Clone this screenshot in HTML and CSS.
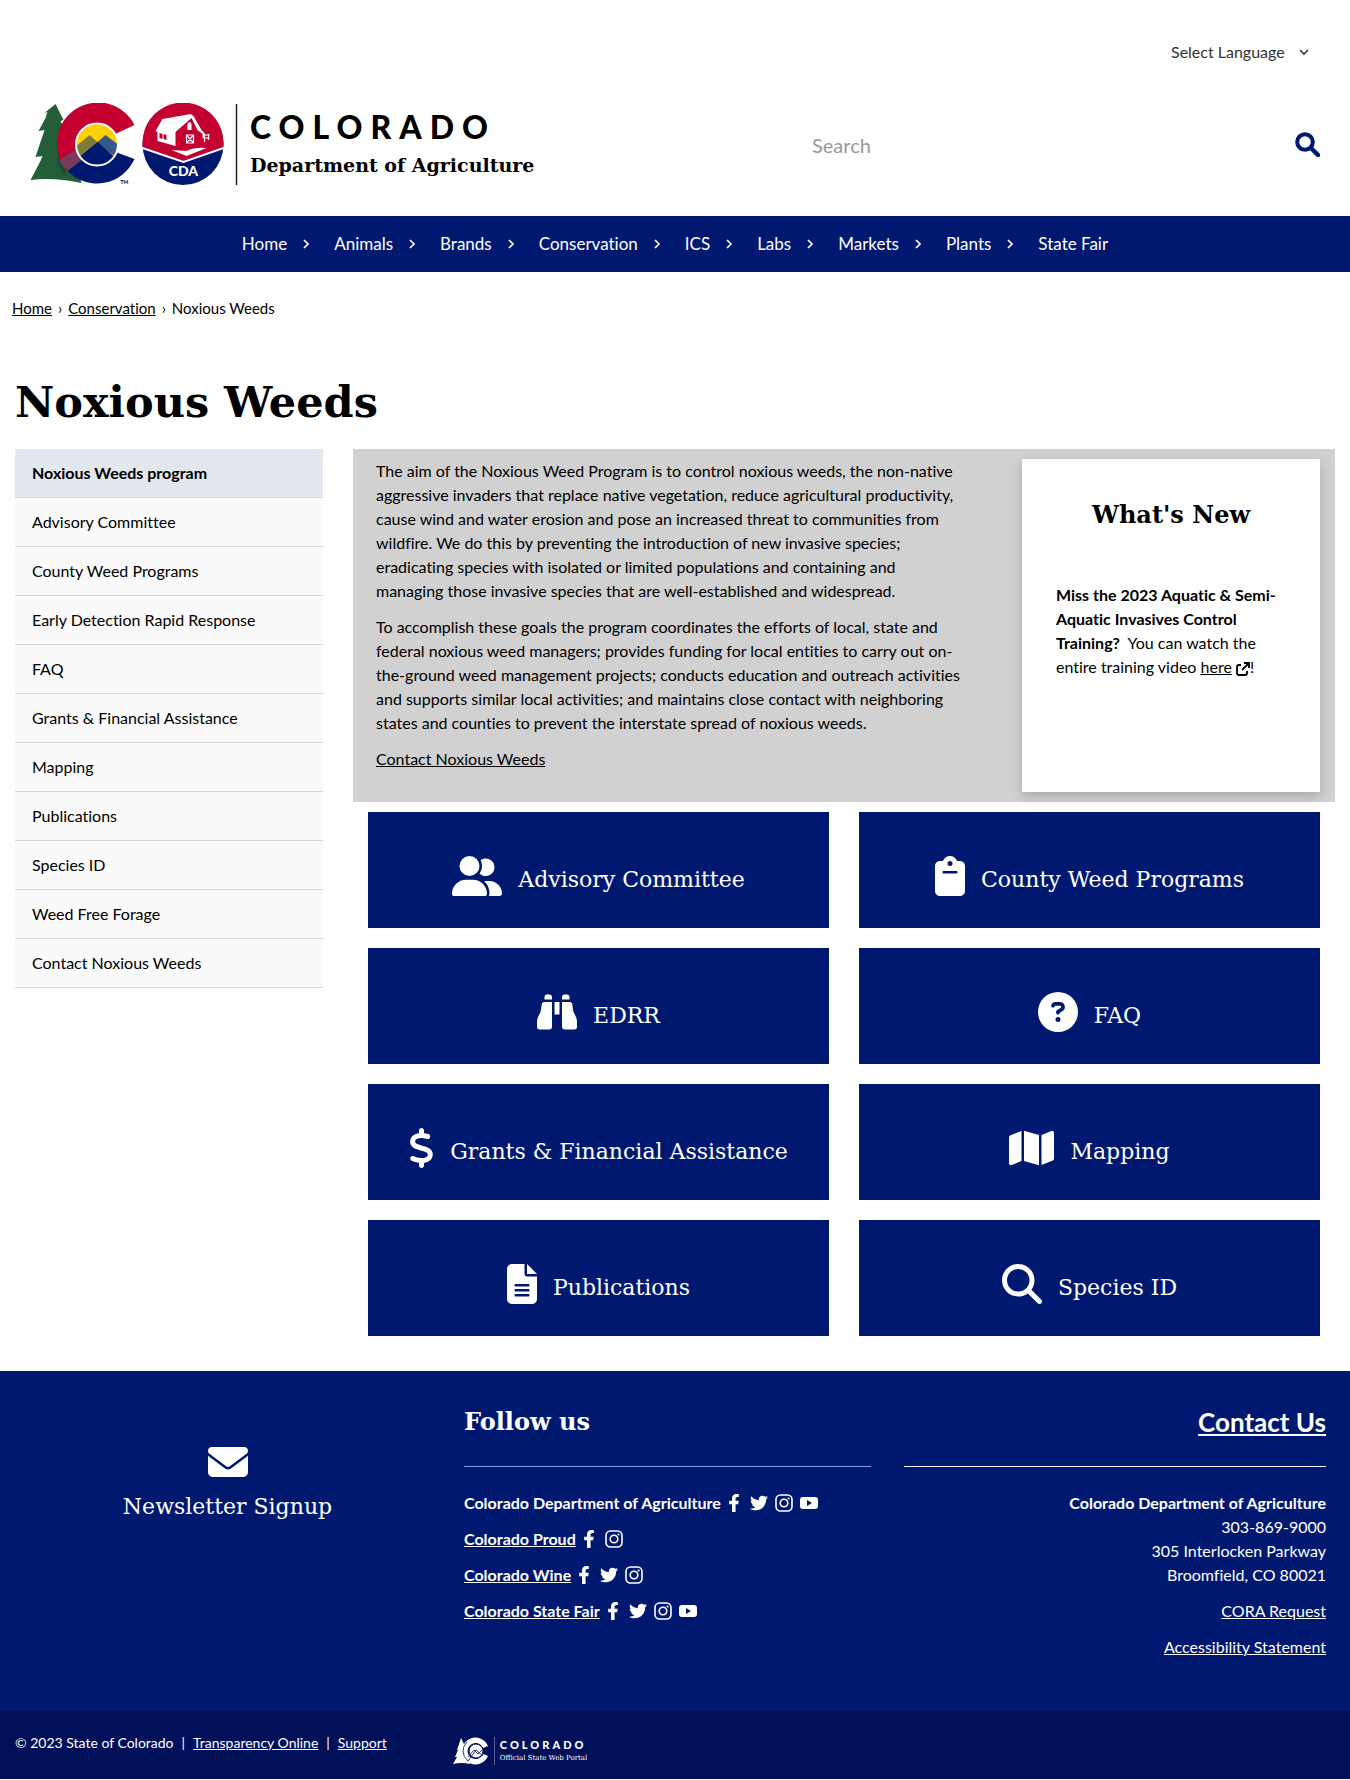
FILE: index.html
```html
<!DOCTYPE html>
<html lang="en">
<head>
<meta charset="utf-8">
<meta name="viewport" content="width=device-width, initial-scale=1">
<title>Noxious Weeds | Department of Agriculture</title>
<link rel="stylesheet" href="styles.css">
</head>
<body>
<svg class="sprite" aria-hidden="true">
  <symbol id="facebook" viewBox="0 0 320 512"><path d="M279.14 288l14.22-92.66h-88.91v-60.13c0-25.35 12.42-50.06 52.24-50.06h40.42V6.26S260.43 0 225.36 0c-73.22 0-121.08 44.38-121.08 124.72v70.62H22.89V288h81.39v224h100.17V288z"/></symbol>
  <symbol id="twitter" viewBox="0 0 512 512"><path d="M459.37 151.716c.325 4.548.325 9.097.325 13.645 0 138.72-105.583 298.558-298.558 298.558-59.452 0-114.68-17.219-161.137-47.106 8.447.974 16.568 1.299 25.34 1.299 49.055 0 94.213-16.568 130.274-44.832-46.132-.975-84.792-31.188-98.112-72.772 6.498.974 12.995 1.624 19.818 1.624 9.421 0 18.843-1.3 27.614-3.573-48.081-9.747-84.143-51.98-84.143-102.985v-1.299c13.969 7.797 30.214 12.67 47.431 13.319-28.264-18.843-46.781-51.005-46.781-87.391 0-19.492 5.197-37.36 14.294-52.954 51.655 63.675 129.3 105.258 216.365 109.807-1.624-7.797-2.599-15.918-2.599-24.04 0-57.828 46.782-104.934 104.934-104.934 30.213 0 57.502 12.67 76.67 33.137 23.715-4.548 46.456-13.32 66.599-25.34-7.798 24.366-24.366 44.833-46.132 57.827 21.117-2.273 41.584-8.122 60.426-16.243-14.292 20.791-32.161 39.308-52.628 54.253z"/></symbol>
  <symbol id="instagram" viewBox="0 0 18 18"><rect x="1" y="1" width="16" height="16" rx="4.5" fill="none" stroke="currentColor" stroke-width="1.6"/><circle cx="9" cy="9" r="3.8" fill="none" stroke="currentColor" stroke-width="1.6"/><circle cx="13.6" cy="4.5" r="1.1"/></symbol>
  <symbol id="youtube" viewBox="0 0 18 18"><path fill-rule="evenodd" d="M3 3h12q3 0 3 3v6q0 3-3 3H3q-3 0-3-3V6q0-3 3-3zM7 6v6l5-3z"/></symbol>
  <symbol id="chevron" viewBox="0 0 8 10"><path d="M2 1l4 4-4 4" fill="none" stroke="currentColor" stroke-width="1.7"/></symbol>
</svg>

<header class="header">
  <div class="language">
    <select class="language-select" aria-label="Select Language">
      <option>Select Language</option>
    </select>
    <svg class="language-arrow" viewBox="0 0 10 6" aria-hidden="true"><path d="M1 1l4 4 4-4" fill="none" stroke="currentColor" stroke-width="1.6"/></svg>
  </div>
  <div class="masthead">
    <a class="brand" href="#">
      <svg class="brand-mark" viewBox="31 103 207 83" aria-hidden="true">
        <path fill="#235e39" d="M56 104l8 16-3 1 7 14 14 48q-28-6-51-3l10-19 2-5-7 1 7-21 2-6-6 1 7-13 2-6-3 1z"/>
        <path fill="#c3002f" d="M135 125A41 41 0 1 0 68 171L82 160L116 134z"/>
        <path fill="#001970" d="M135 159A41 41 0 0 1 68 171L82 158L116 152z"/>
        <path fill="#7a3b58" d="M77 149l5 11-14 11q-6-6-8-11z"/>
        <path fill="#1d4a35" opacity=".8" d="M58 146q-1 15 10 25l-3 4-7-10z"/>
        <circle cx="97.5" cy="144.500" r="21" fill="#ffd100"/>
        <path fill="#807b3a" d="M77 146l13-11 8 7-17 15q-5-5-4-11z"/>
        <path fill="#345a87" d="M97 143l9-8 12 9q0 8-3 12z"/>
        <path fill="#001970" d="M98 142l17 15q-7 8-18 8t-16-9z"/>
        <circle cx="97.5" cy="144.500" r="21" fill="none" stroke="#fff" stroke-width="2"/>
        <text x="121" y="184" class="mark-tm">TM</text>
        <circle cx="183.5" cy="144.500" r="40.5" fill="#001970"/>
        <path fill="#c3002f" d="M143.200 147A40.500 40.500 0 1 1 223.800 147L184 161z"/>
        <path d="M143 148l41 14 40-14" fill="none" stroke="#fff" stroke-width="2"/>
        <path fill="#fff" d="M156 131l7-12 28-5 3 2 8 14 3 3v5h-2v-4l-5-4-6-12-16 14 0 14-18-5v-9z"/>
        <path fill="#c3002f" d="M160 133l3 1v5l-3-1zM164 134l3 1v5l-3-1z"/>
        <path fill="#fff" d="M188 124q2-4 4 0v6h-4z"/>
        <path d="M187 135h7v8h-7zl7 8M194 135l-7 8M204 135h6M204 138h6M209 134v6M205 134v8" fill="none" stroke="#fff" stroke-width="1.200"/>
        <path fill="#fff" d="M172 150l15 1q8-4 20-3l-20 8z"/>
        <text x="184" y="176" class="mark-cda">CDA</text>
        <path stroke="#222" stroke-width="1.500" d="M237 104v81"/>
      </svg>
      <span class="brand-text">
        <span class="brand-state">COLORADO</span>
        <span class="brand-agency">Department of Agriculture</span>
      </span>
    </a>
    <form class="search">
      <input class="search-input" type="search" placeholder="Search" aria-label="Search">
      <button class="search-button" type="button" aria-label="Search">
        <svg class="search-icon" viewBox="0 0 25 25"><circle cx="10" cy="10" r="7.800" fill="none" stroke="currentColor" stroke-width="4"/><path d="M16 16l7 7" stroke="currentColor" stroke-width="4.500" stroke-linecap="round"/></svg>
      </button>
    </form>
  </div>
</header>

<nav class="nav" aria-label="Main">
  <a class="nav-link" href="#">Home<svg class="nav-arrow"><use href="#chevron"/></svg></a>
  <a class="nav-link" href="#">Animals<svg class="nav-arrow"><use href="#chevron"/></svg></a>
  <a class="nav-link" href="#">Brands<svg class="nav-arrow"><use href="#chevron"/></svg></a>
  <a class="nav-link" href="#">Conservation<svg class="nav-arrow"><use href="#chevron"/></svg></a>
  <a class="nav-link" href="#">ICS<svg class="nav-arrow"><use href="#chevron"/></svg></a>
  <a class="nav-link" href="#">Labs<svg class="nav-arrow"><use href="#chevron"/></svg></a>
  <a class="nav-link" href="#">Markets<svg class="nav-arrow"><use href="#chevron"/></svg></a>
  <a class="nav-link" href="#">Plants<svg class="nav-arrow"><use href="#chevron"/></svg></a>
  <a class="nav-link" href="#">State Fair</a>
</nav>

<nav class="breadcrumb" aria-label="Breadcrumb">
  <a href="#">Home</a><span>›</span><a href="#">Conservation</a><span>›</span><span>Noxious Weeds</span>
</nav>

<main class="main">
  <h1 class="title">Noxious Weeds</h1>
  <div class="columns">
    <nav class="sidebar" aria-label="Section">
      <a class="sidebar-link sidebar-current" href="#">Noxious Weeds program</a>
      <a class="sidebar-link" href="#">Advisory Committee</a>
      <a class="sidebar-link" href="#">County Weed Programs</a>
      <a class="sidebar-link" href="#">Early Detection Rapid Response</a>
      <a class="sidebar-link" href="#">FAQ</a>
      <a class="sidebar-link" href="#">Grants &amp; Financial Assistance</a>
      <a class="sidebar-link" href="#">Mapping</a>
      <a class="sidebar-link" href="#">Publications</a>
      <a class="sidebar-link" href="#">Species ID</a>
      <a class="sidebar-link" href="#">Weed Free Forage</a>
      <a class="sidebar-link" href="#">Contact Noxious Weeds</a>
    </nav>
    <div class="content">
      <section class="intro">
        <div class="intro-text">
          <p>The aim of the Noxious Weed Program is to control noxious weeds, the non-native aggressive invaders that replace native vegetation, reduce agricultural productivity, cause wind and water erosion and pose an increased threat to communities from wildfire. We do this by preventing the introduction of new invasive species; eradicating species with isolated or limited populations and containing and managing those invasive species that are well-established and widespread.</p>
          <p>To accomplish these goals the program coordinates the efforts of local, state and federal noxious weed managers; provides funding for local entities to carry out on-the-ground weed management projects; conducts education and outreach activities and supports similar local activities; and maintains close contact with neighboring states and counties to prevent the interstate spread of noxious weeds.</p>
          <p><a href="#">Contact Noxious Weeds</a></p>
        </div>
        <aside class="news">
          <h2 class="news-title">What's New</h2>
          <p><strong>Miss the 2023 Aquatic &amp; Semi-Aquatic Invasives Control Training?</strong>&nbsp; You can watch the entire training video <a href="#">here</a> <svg class="external" viewBox="0 0 14 14" aria-hidden="true"><path d="M5 3H3q-2 0-2 2v6q0 2 2 2h6q2 0 2-2V9M8 1h5v5M13 1L6 8" fill="none" stroke="currentColor" stroke-width="1.800"/></svg>!</p>
        </aside>
      </section>
      <section class="tiles">
        <a class="tile" href="#"><svg class="tile-icon" viewBox="0 0 640 512"><path d="M96 128a128 128 0 1 1 256 0A128 128 0 1 1 96 128zM0 482.3C0 383.8 79.800 304 178.300 304h91.400C368.200 304 448 383.800 448 482.300c0 16.400-13.300 29.700-29.700 29.700H29.700C13.300 512 0 498.700 0 482.300zM609.300 512H471.400c5.400-9.400 8.600-20.300 8.600-32v-8c0-60.700-27.100-115.200-69.800-151.800c2.400-.1 4.700-.2 7.100-.2h61.400C567.800 320 640 392.200 640 481.300c0 17-13.800 30.700-30.700 30.700zM432 256c-31 0-59-12.600-79.300-32.900C372.400 196.500 384 163.600 384 128c0-26.800-6.600-52.100-18.300-74.300C384.300 40.100 407.200 32 432 32c61.900 0 112 50.100 112 112s-50.100 112-112 112z"/></svg><span>Advisory Committee</span></a>
        <a class="tile" href="#"><svg class="tile-icon" viewBox="0 0 384 512"><path d="M192 0c-41.800 0-77.400 26.700-90.500 64H64C28.700 64 0 92.700 0 128V448c0 35.300 28.700 64 64 64H320c35.300 0 64-28.700 64-64V128c0-35.300-28.700-64-64-64H282.500C269.400 26.700 233.800 0 192 0zm0 64a32 32 0 1 1 0 64 32 32 0 1 1 0-64zM112 192H272c8.800 0 16 7.200 16 16s-7.200 16-16 16H112c-8.800 0-16-7.200-16-16s7.200-16 16-16z"/></svg><span>County Weed Programs</span></a>
        <a class="tile" href="#"><svg class="tile-icon" viewBox="0 0 512 512"><path d="M128 32h32c17.700 0 32 14.300 32 32V96H96V64c0-17.700 14.300-32 32-32zm64 96V448c0 17.700-14.300 32-32 32H32c-17.700 0-32-14.300-32-32V388.900c0-34.600 9.400-68.600 27.200-98.300C40.900 267.800 49.700 242.400 53 216L60.500 156c2-16 15.600-28 31.800-28H192zm227.800 0c16.100 0 29.800 12 31.800 28L459 216c3.300 26.400 12.100 51.800 25.800 74.600c17.800 29.700 27.200 63.700 27.200 98.300V448c0 17.700-14.300 32-32 32H352c-17.700 0-32-14.300-32-32V128h99.800zM320 64c0-17.700 14.300-32 32-32h32c17.700 0 32 14.300 32 32V96H320V64zm-32 64V288H224V128h64z"/></svg><span>EDRR</span></a>
        <a class="tile" href="#"><svg class="tile-icon" viewBox="0 0 512 512"><path d="M256 512A256 256 0 1 0 256 0a256 256 0 1 0 0 512zM169.800 165.300c7.900-22.300 29.100-37.300 52.800-37.300h58.300c34.900 0 63.100 28.300 63.100 63.100c0 22.600-12.100 43.500-31.700 54.800L280 264.400c-.2 13-10.900 23.600-24 23.600c-13.300 0-24-10.700-24-24V250.500c0-8.600 4.600-16.500 12.100-20.800l44.300-25.400c4.700-2.700 7.600-7.700 7.600-13.100c0-8.400-6.800-15.100-15.100-15.100H222.600c-3.400 0-6.400 2.100-7.500 5.300l-.4 1.200c-4.400 12.500-18.200 19-30.600 14.600s-19-18.200-14.600-30.600l.4-1.200zM224 352a32 32 0 1 1 64 0 32 32 0 1 1 -64 0z"/></svg><span>FAQ</span></a>
        <a class="tile" href="#"><svg class="tile-icon" viewBox="0 0 320 512"><path d="M160 0c17.700 0 32 14.300 32 32V67.700c1.600 .2 3.100 .4 4.700 .7c.4 .1 .7 .1 1.100 .2l48 8.800c17.400 3.200 28.900 19.900 25.700 37.200s-19.900 28.900-37.200 25.700l-47.500-8.700c-31.300-4.600-58.900-1.500-78.300 6.200s-27.200 18.300-29 28.100c-2 10.700-.5 16.700 1.200 20.400c1.800 3.900 5.500 8.300 12.800 13.200c16.300 10.700 41.300 17.700 73.700 26.300l2.900 .8c28.600 7.600 63.600 16.800 89.600 33.800c14.200 9.300 27.600 21.900 35.900 39.500c8.500 17.900 10.300 37.900 6.400 59.200c-6.900 38-33.100 63.400-65.600 76.700c-13.700 5.600-28.600 9.200-44.400 11V480c0 17.700-14.300 32-32 32s-32-14.300-32-32V445.100c-.4-.1-.9-.1-1.300-.2l-.2 0 0 0c-24.400-3.800-64.500-14.300-91.500-26.300c-16.100-7.200-23.400-26.100-16.200-42.200s26.100-23.400 42.200-16.200c20.900 9.300 55.300 18.500 75.200 21.600c31.900 4.700 58.200 2 76-5.300c16.900-6.900 24.600-16.900 26.800-28.900c1.900-10.600 .4-16.700-1.300-20.400c-1.900-4-5.600-8.400-13-13.300c-16.400-10.700-41.500-17.700-74-26.300l-2.800-.7 0 0C119.400 279.300 84.400 270 58.400 253c-14.200-9.300-27.500-22-35.800-39.600c-8.400-17.900-10.100-37.900-6.100-59.200C23.700 116 52.300 91.200 84.800 78.300c13.300-5.300 27.900-8.900 43.200-11V32c0-17.700 14.300-32 32-32z"/></svg><span>Grants &amp; Financial Assistance</span></a>
        <a class="tile" href="#"><svg class="tile-icon" viewBox="0 0 576 512"><path d="M384 476.100L192 421.200V35.900L384 90.800V476.100zm32-1.200V88.400L543.100 37.500c15.800-6.300 32.900 5.300 32.900 22.300V394.600c0 9.800-6 18.600-15.100 22.300L416 474.800zM15.100 95.100L160 37.200V423.600L32.900 474.500C17.100 480.800 0 469.200 0 452.200V117.400c0-9.800 6-18.600 15.100-22.300z"/></svg><span>Mapping</span></a>
        <a class="tile" href="#"><svg class="tile-icon" viewBox="0 0 384 512"><path d="M64 0C28.700 0 0 28.700 0 64V448c0 35.300 28.700 64 64 64H320c35.300 0 64-28.700 64-64V160H256c-17.700 0-32-14.300-32-32V0H64zM256 0V128H384L256 0zM112 256H272c8.800 0 16 7.200 16 16s-7.200 16-16 16H112c-8.800 0-16-7.200-16-16s7.200-16 16-16zm0 64H272c8.800 0 16 7.200 16 16s-7.200 16-16 16H112c-8.800 0-16-7.200-16-16s7.200-16 16-16zm0 64H272c8.800 0 16 7.200 16 16s-7.200 16-16 16H112c-8.800 0-16-7.200-16-16s7.200-16 16-16z"/></svg><span>Publications</span></a>
        <a class="tile" href="#"><svg class="tile-icon" viewBox="0 0 512 512"><path d="M416 208c0 45.900-14.900 88.300-40 122.700L502.600 457.400c12.500 12.500 12.500 32.800 0 45.300s-32.800 12.500-45.300 0L330.700 376c-34.400 25.200-76.800 40-122.700 40C93.100 416 0 322.900 0 208S93.100 0 208 0S416 93.100 416 208zM208 352a144 144 0 1 0 0-288 144 144 0 1 0 0 288z"/></svg><span>Species ID</span></a>
      </section>
    </div>
  </div>
</main>

<footer>
  <div class="footer">
    <a class="newsletter" href="#">
      <svg class="envelope" viewBox="0 64 512 384"><path d="M48 64C21.500 64 0 85.500 0 112c0 15.100 7.100 29.300 19.200 38.400L236.800 313.600c11.400 8.500 27 8.500 38.400 0L492.800 150.400c12.100-9.100 19.200-23.300 19.200-38.400c0-26.500-21.500-48-48-48H48zM0 176V384c0 35.300 28.700 64 64 64H448c35.300 0 64-28.700 64-64V176L294.400 339.200c-22.800 17.100-54 17.100-76.800 0L0 176z"/></svg>
      <span>Newsletter Signup</span>
    </a>
    <section class="follow">
      <h2 class="footer-title">Follow us</h2>
      <ul class="follow-list">
        <li class="follow-row"><strong>Colorado Department of Agriculture</strong>
          <a class="social social-narrow" href="#" aria-label="Facebook"><svg><use href="#facebook"/></svg></a><a class="social" href="#" aria-label="Twitter"><svg><use href="#twitter"/></svg></a><a class="social" href="#" aria-label="Instagram"><svg><use href="#instagram"/></svg></a><a class="social" href="#" aria-label="YouTube"><svg><use href="#youtube"/></svg></a></li>
        <li class="follow-row"><a class="follow-name" href="#">Colorado Proud</a>
          <a class="social social-narrow" href="#" aria-label="Facebook"><svg><use href="#facebook"/></svg></a><a class="social" href="#" aria-label="Instagram"><svg><use href="#instagram"/></svg></a></li>
        <li class="follow-row"><a class="follow-name" href="#">Colorado Wine</a>
          <a class="social social-narrow" href="#" aria-label="Facebook"><svg><use href="#facebook"/></svg></a><a class="social" href="#" aria-label="Twitter"><svg><use href="#twitter"/></svg></a><a class="social" href="#" aria-label="Instagram"><svg><use href="#instagram"/></svg></a></li>
        <li class="follow-row"><a class="follow-name" href="#">Colorado State Fair</a>
          <a class="social social-narrow" href="#" aria-label="Facebook"><svg><use href="#facebook"/></svg></a><a class="social" href="#" aria-label="Twitter"><svg><use href="#twitter"/></svg></a><a class="social" href="#" aria-label="Instagram"><svg><use href="#instagram"/></svg></a><a class="social" href="#" aria-label="YouTube"><svg><use href="#youtube"/></svg></a></li>
      </ul>
    </section>
    <section class="contact">
      <h2 class="footer-title contact-title"><a href="#">Contact Us</a></h2>
      <p><strong>Colorado Department of Agriculture</strong><br>303-869-9000<br>305 Interlocken Parkway<br>Broomfield, CO 80021</p>
      <p><a href="#">CORA Request</a></p>
      <p><a href="#">Accessibility Statement</a></p>
    </section>
  </div>
  <div class="legal">
    <p class="legal-links">© 2023 State of Colorado<span>|</span><a href="#">Transparency Online</a><span>|</span><a href="#">Support</a></p>
    <a class="portal" href="#">
      <svg class="portal-mark" viewBox="0 0 42 28" aria-hidden="true">
        <path fill="#fff" d="M8 1l3 6 3 8 3 12q-9-2-17 0l4-7-2 0 3-7-1 0z"/>
        <path fill="#fff" d="M35 9A13.500 13.500 0 1 0 35 19l-5-2a8 8 0 1 1 0-6z"/>
        <circle cx="23" cy="14" r="7" fill="#fff" stroke="#001159"/>
        <path d="M10 14q0 6 5 10l8-11 7 6M15 20l6-7 4 4 4-4M10 14q0-5 4-9" fill="none" stroke="#001159" stroke-width=".8"/>
        <path d="M41.500 0v28" stroke="#566096"/>
      </svg>
      <span class="portal-text"><span class="portal-state">COLORADO</span><span class="portal-name">Official State Web Portal</span></span>
    </a>
  </div>
</footer>
</body>
</html>
```

FILE: styles.css
```css
:root {
  --navy: #001970;
  --sans: Lato, "Trebuchet MS", sans-serif;
  --slab: "DejaVu Serif", "Liberation Serif", serif;
}

* { box-sizing: border-box; }

body {
  margin: 0;
  background: #fff;
  color: #000;
  font: 16px/24px var(--sans);
  font-variant-ligatures: none;
}

a { color: inherit; }
p { margin: 0 0 12px; }
svg { fill: currentColor; flex: none; }
.sprite { display: none; }

/* Header */
.header { padding: 40px 30px 30px; }
.language {
  display: flex;
  justify-content: flex-end;
  align-items: center;
  gap: 14px;
  padding-right: 11px;
  color: #333;
}
.language-select {
  appearance: none;
  border: 0;
  padding: 0;
  background: none;
  color: inherit;
  font: inherit;
}
.language-arrow { width: 10px; height: 6px; }
.masthead {
  display: flex;
  justify-content: space-between;
  align-items: center;
  margin-top: 39px;
}
.brand {
  display: flex;
  align-items: center;
  gap: 12px;
  color: #000;
  text-decoration: none;
}
.brand-mark { width: 208px; height: 83px; }
.mark-tm { font: bold 5px var(--sans); }
.mark-cda { font: 900 14px var(--sans); fill: #fff; text-anchor: middle; }
.brand-text { display: flex; flex-direction: column; gap: 4px; }
.brand-state { font: 900 32px/36px var(--sans); letter-spacing: 8px; }
.brand-agency { font: bold 19px/32px var(--slab); }
.search { display: flex; align-items: center; width: 508px; }
.search-input {
  flex: 1;
  min-width: 0;
  border: 0;
  padding: 0;
  background: none;
  font: 20px/28px var(--sans);
}
.search-input::placeholder { color: #999; }
.search-button { display: flex; border: 0; padding: 0; background: none; color: var(--navy); }
.search-icon { width: 25px; height: 25px; }

/* Main navigation */
.nav {
  display: flex;
  justify-content: center;
  gap: 24px;
  padding: 16px 0;
  background: var(--navy);
  color: #fff;
  font-size: 17px;
}
.nav-link { display: flex; align-items: center; gap: 15px; text-decoration: none; }
.nav-arrow { width: 8px; height: 10px; }

.breadcrumb { display: flex; gap: 6px; padding: 24px 12px; font-size: 15px; }

/* Page body */
.main { padding: 0 15px 35px; }
.title { margin: 28px 0 17px; font: bold 43px/60px var(--slab); }
.columns { display: grid; grid-template-columns: 308fr 982fr; gap: 30px; align-items: start; }
.sidebar-link {
  display: block;
  padding: 12px 17px;
  border-bottom: 1px solid #d6d6d6;
  background: #fafafa;
  text-decoration: none;
}
.sidebar-current { background: #e3e7ee; font-weight: bold; }

.intro {
  display: grid;
  grid-template-columns: 1fr 298px;
  gap: 55px;
  padding: 10px 15px 10px 23px;
  background: #d1d1d1;
}
.news {
  min-height: 333px;
  padding: 36px 34px;
  background: #fff;
  box-shadow: 0 4px 12px rgba(0, 0, 0, .2);
}
.news-title { margin: 0 0 48px; font: bold 24px/40px var(--slab); text-align: center; }
.external { width: 14px; height: 14px; vertical-align: -3px; }

.tiles { display: grid; grid-template-columns: 1fr 1fr; gap: 20px 30px; padding: 10px 15px 0; }
.tile {
  display: flex;
  justify-content: center;
  align-items: center;
  gap: 16px;
  padding: 44px 8px 32px;
  background: var(--navy);
  color: #fff;
  font: 22px/32px var(--slab);
  text-decoration: none;
}
.tile span { padding-top: 8px; }
.tile-icon { height: 40px; }

/* Footer */
.footer {
  display: grid;
  grid-template-columns: 425fr 416fr 422fr;
  gap: 24px;
  padding: 31px 24px 40px 15px;
  background: var(--navy);
  color: #fff;
}
.newsletter {
  display: flex;
  flex-direction: column;
  align-items: center;
  gap: 14px;
  padding-top: 45px;
  font: 22px/32px var(--slab);
  text-decoration: none;
}
.envelope { width: 40px; height: 30px; }
.follow { padding-right: 9px; }
.footer-title {
  margin: 0 0 24px;
  padding-bottom: 24px;
  border-bottom: 1px solid #fff;
  font: bold 24px/40px var(--slab);
}
.contact-title { font-family: var(--sans); font-size: 26px; }
.follow .footer-title { border-color: #8c9be6; }
.follow-list { margin: 0; padding: 0; list-style: none; }
.follow-row { display: flex; align-items: center; gap: 7px; margin-bottom: 12px; }
.follow-name { font-weight: bold; }
.social { display: flex; }
.social svg { width: 18px; height: 18px; }
.social-narrow { padding-right: 3px; }
.social-narrow svg { width: 12px; }
.contact { text-align: right; }

.legal {
  display: flex;
  align-items: flex-start;
  gap: 66px;
  padding: 20px 15px 14px;
  background: #001159;
  color: #fff;
  font-size: 14px;
}
.legal-links { margin: 0; }
.legal-links span { margin: 0 8px; }
.portal { display: flex; align-items: center; gap: 5px; padding-top: 6px; color: #fff; text-decoration: none; }
.portal-mark { width: 42px; height: 28px; }
.portal-text { display: flex; flex-direction: column; }
.portal-state { font: 900 11px/14px var(--sans); letter-spacing: 3px; }
.portal-name { font: 7px/12px var(--slab); }
```
